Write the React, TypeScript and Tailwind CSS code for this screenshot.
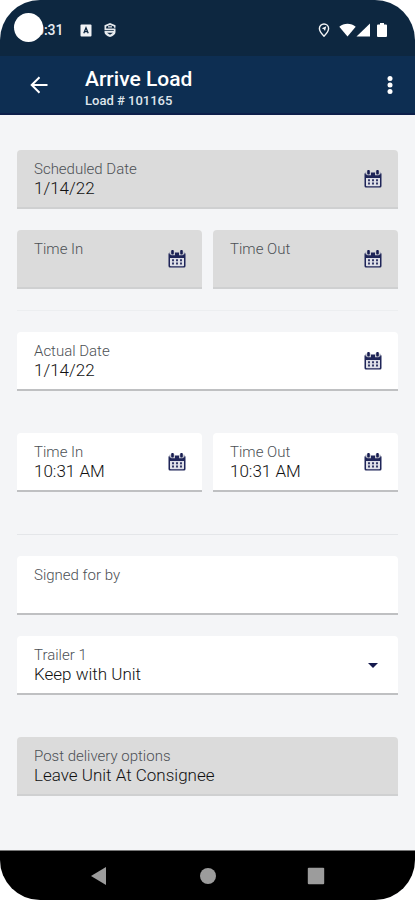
import React, { ReactNode, useState } from 'react';

interface FieldProps {
  id: string
  label: string
  disabled?: boolean
  icon?: ReactNode
  children: ReactNode
}

interface TextFieldProps {
  id: string
  label: string
  initial?: string
  disabled?: boolean
  picker?: boolean
}

interface SelectFieldProps {
  id: string
  label: string
  options: string[]
  disabled?: boolean
}

const control = "block w-full h-5 p-0 bg-transparent text-[17px] leading-5 font-light text-[#111] opacity-100 outline-none appearance-none";

function CalendarIcon() {
  return (
    <svg viewBox="0 0 18 18" className="w-[18px] h-[18px]" aria-hidden="true">
      <path d="M2 2.500h14A1.500 1.500 0 0 1 17.500 4v12a1.500 1.500 0 0 1-1.500 1.500H2A1.500 1.500 0 0 1 .5 16V4A1.500 1.500 0 0 1 2 2.500z" fill="#1f2558" />
      <path d="M2 8h14v7.400a.8.8 0 0 1-.8.8H2.800a.8.8 0 0 1-.8-.8z" fill="#dfe0e8" />
      <path d="M1.500 1.500h5.500v3.700H3.500L1.500 4zM16.500 1.500H11v3.700h3.500l2-1.200z" fill="#c9cbd3" />
      <rect x="3.200" y="0" width="2.600" height="4.600" rx="1" fill="#171c50" />
      <rect x="12.200" y="0" width="2.600" height="4.600" rx="1" fill="#171c50" />
      <path d="M4 9.200h2v2H4zM8 9.200h2v2H8zM12 9.200h2v2h-2zM4 12.600h2v2H4zM8 12.600h2v2H8zM12 12.600h2v2h-2z" fill="#353a69" />
    </svg>
  );
}

function Field({ id, label, disabled, icon, children }: FieldProps) {
  return (
    <div className={`flex-1 min-w-0 h-[59px] flex items-center pl-[17px] pr-4 border-b-2 rounded-t ${disabled ? "bg-[#dbdbdb] border-[#cfd0d1]" : "bg-white border-[#bfc0c2]"}`}>
      <div className="flex-1 min-w-0">
        <label htmlFor={id} className="block text-[15px] leading-[18px] font-light text-[#4c5055]">{label}</label>
        {children}
      </div>
      {icon}
    </div>
  );
}

function TextField({ id, label, initial = "", disabled, picker }: TextFieldProps) {
  const [value, setValue] = useState(initial);

  return (
    <Field
      id={id}
      label={label}
      disabled={disabled}
      icon={picker && (
        <button type="button" disabled={disabled} aria-label={`Pick ${label}`}>
          <CalendarIcon />
        </button>
      )}
    >
      <input id={id} type="text" value={value} disabled={disabled} onChange={e => setValue(e.target.value)} className={control} />
    </Field>
  );
}

function SelectField({ id, label, options, disabled }: SelectFieldProps) {
  return (
    <Field
      id={id}
      label={label}
      disabled={disabled}
      icon={!disabled && (
        <svg viewBox="0 0 18 18" className="w-[18px] h-[18px] pointer-events-none" aria-hidden="true">
          <path d="M4 7h10l-5 5z" fill="#14194d" />
        </svg>
      )}
    >
      <select id={id} disabled={disabled} className={control}>
        {options.map(o => <option key={o}>{o}</option>)}
      </select>
    </Field>
  );
}

function StatusBar() {
  return (
    <div className="relative h-14 shrink-0 bg-[#0d2740] flex items-center justify-between pl-7 pr-7 pt-1 text-white">
      <div className="flex items-center">
        <span className="text-[14px] leading-5 font-medium text-[#e7ecf1]">10:31</span>
        <svg viewBox="0 0 12 13" className="w-3 h-[13px] ml-4" aria-hidden="true">
          <rect x=".5" y=".5" width="11" height="12" rx="1" fill="#f1f3f5" />
          <path d="M3.800 9.300 6 3.800l2.200 5.500M4.700 7.600h2.600" fill="none" stroke="#0d2740" strokeWidth="1.300" />
        </svg>
        <svg viewBox="0 0 12 14" className="w-3 h-[14px] ml-3" aria-hidden="true">
          <path d="M6 0 11.500 2.200v2.600H10V3.400L6 1.900 2.200 3.400v2.200h9.300v3.600c0 2.200-2.400 3.700-5.500 4.800C2.900 12.900.5 11.400.5 9.200V8h9.300V7.200H.5v-5z" fill="#e6eaee" />
          <path d="M4 3.800h4" stroke="#e6eaee" strokeWidth="1.200" />
          <path d="M3 9.800h6L6 11.800z" fill="#0d2740" />
        </svg>
      </div>
      <div className="flex items-center">
        <svg viewBox="0 0 12 14" className="w-3 h-[14px]" aria-hidden="true">
          <path d="M6 1a4.600 4.600 0 0 0-4.600 4.600C1.400 8.800 6 13.200 6 13.200s4.600-4.400 4.600-7.600A4.600 4.600 0 0 0 6 1z" fill="none" stroke="#f1f3f5" strokeWidth="1.400" />
          <path d="M8.300 3.300 7 8 5.800 6.200 3.800 5.300z" fill="#f1f3f5" />
        </svg>
        <svg viewBox="0 0 17 14" className="w-[17px] h-[14px] ml-[9px]" aria-hidden="true">
          <path d="M.3 3.800C4.500-.3 12.500-.3 16.700 3.800L8.500 13.500z" fill="#fff" />
        </svg>
        <svg viewBox="0 0 14 14" className="w-[14px] h-[14px]" aria-hidden="true">
          <path d="M14 .5v13H.5z" fill="#fff" />
        </svg>
        <svg viewBox="0 0 10 14" className="w-[10px] h-[14px] ml-[7px]" aria-hidden="true">
          <path d="M3 0h4v1.500h2a1 1 0 0 1 1 1V13a1 1 0 0 1-1 1H1a1 1 0 0 1-1-1V2.500a1 1 0 0 1 1-1h2z" fill="#fff" />
        </svg>
      </div>
      {/* camera cutout */}
      <div className="absolute left-[14px] top-[13px] w-[29px] h-[29px] rounded-full bg-white" />
    </div>
  );
}

function AppBar() {
  return (
    <header className="h-[59px] shrink-0 bg-[#0d2e52] border-b-2 border-[#0c1f4a] flex items-center pl-[30px] pr-[21px] text-white">
      <button type="button" aria-label="Back">
        <svg viewBox="0 0 18 18" className="w-[18px] h-[18px]" aria-hidden="true">
          <path d="M17.500 9H2M9.500 1.200 1.700 9l7.800 7.800" fill="none" stroke="#fff" strokeWidth="2" />
        </svg>
      </button>
      <div className="flex-1 ml-[37px] mt-2">
        <h1 className="text-[21px] leading-6 font-medium">Arrive Load</h1>
        <p className="text-[13px] leading-5 font-medium text-[#dfe5ec]">Load # 101165</p>
      </div>
      <button type="button" aria-label="More options">
        <svg viewBox="0 0 8 20" className="w-2 h-5" aria-hidden="true">
          <circle cx="4" cy="3.500" r="2.500" fill="#fff" />
          <circle cx="4" cy="10" r="2.500" fill="#fff" />
          <circle cx="4" cy="16.500" r="2.500" fill="#fff" />
        </svg>
      </button>
    </header>
  );
}

function NavBar() {
  return (
    <nav className="h-[50px] shrink-0 bg-black border-t border-[#777] flex items-center justify-center gap-[90px] text-[#9c9c9c]">
      <button type="button" aria-label="Back">
        <svg viewBox="0 0 18 18" className="w-[18px] h-[18px]" aria-hidden="true">
          <path d="M15 0v18L0 9z" fill="currentColor" />
        </svg>
      </button>
      <button type="button" aria-label="Home">
        <svg viewBox="0 0 18 18" className="w-[18px] h-[18px]" aria-hidden="true">
          <circle cx="9" cy="9" r="8" fill="currentColor" />
        </svg>
      </button>
      <button type="button" aria-label="Recent apps">
        <svg viewBox="0 0 18 18" className="w-[18px] h-[18px]" aria-hidden="true">
          <rect x=".8" y=".8" width="16.400" height="16.400" rx="1" fill="currentColor" />
        </svg>
      </button>
    </nav>
  );
}

export default function App() {
  return (
    <div className="min-h-screen bg-white font-['Roboto',sans-serif]">
      <div className="min-h-screen flex flex-col overflow-hidden rounded-[40px] bg-[#f4f5f7]">
        <StatusBar />
        <AppBar />

        <main className="flex-1 px-[17px] pt-[35px] pb-[53px]">
          <form className="flex flex-col gap-[42px]" onSubmit={e => e.preventDefault()}>
            <div className="flex flex-col gap-[21px]">
              <div className="flex">
                <TextField id="scheduled-date" label="Scheduled Date" initial="1/14/22" disabled picker />
              </div>
              <div className="flex gap-[11px]">
                <TextField id="scheduled-in" label="Time In" disabled picker />
                <TextField id="scheduled-out" label="Time Out" disabled picker />
              </div>
              <hr className="border-[#eceef0]" />
              <div className="flex">
                <TextField id="actual-date" label="Actual Date" initial="1/14/22" picker />
              </div>
            </div>

            <div className="flex gap-[11px]">
              <TextField id="actual-in" label="Time In" initial="10:31 AM" picker />
              <TextField id="actual-out" label="Time Out" initial="10:31 AM" picker />
            </div>

            <div className="flex flex-col gap-[21px]">
              <hr className="border-[#e4e6e9]" />
              <div className="flex">
                <TextField id="signed-by" label="Signed for by" />
              </div>
              <div className="flex">
                <SelectField id="trailer" label="Trailer 1" options={["Keep with Unit"]} />
              </div>
            </div>

            <div className="flex">
              <SelectField id="post-delivery" label="Post delivery options" options={["Leave Unit At Consignee"]} disabled />
            </div>
          </form>
        </main>

        <NavBar />
      </div>
    </div>
  );
}
